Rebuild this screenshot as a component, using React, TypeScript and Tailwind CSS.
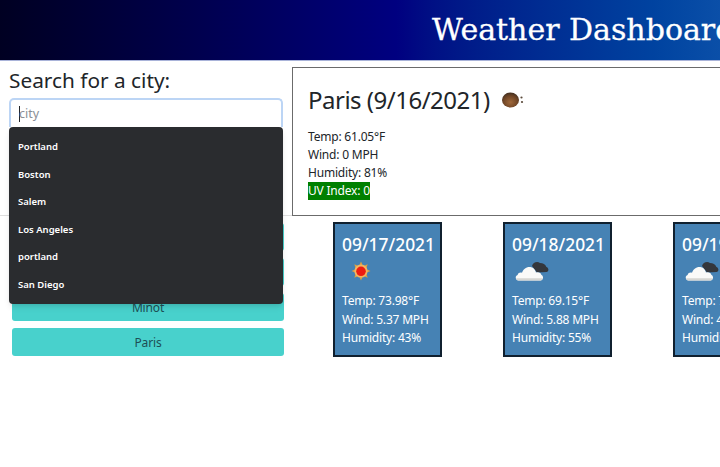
import React from "react";

const suggestions = ["Portland", "Boston", "Salem", "Los Angeles", "portland", "San Diego"];
const history = ["Portland", "Boston", "Minot", "Paris"];

const forecast = [
  { date: "09/17/2021", icon: "sun", temp: "73.98", wind: "5.37", humidity: "43" },
  { date: "09/18/2021", icon: "cloud", temp: "69.15", wind: "5.88", humidity: "55" },
  { date: "09/19/2021", icon: "cloud", temp: "72.41", wind: "4.12", humidity: "52" },
];

function BallIcon() {
  return (
    <svg width="24" height="20" viewBox="0 0 24 20" className="ml-[11px]">
      <defs>
        <radialGradient id="ball" cx="50%" cy="65%" r="60%">
          <stop offset="0%" stopColor="#a0683a" />
          <stop offset="70%" stopColor="#6f4526" />
          <stop offset="100%" stopColor="#4a3322" />
        </radialGradient>
      </defs>
      <ellipse cx="9.5" cy="10" rx="8.5" ry="7.5" fill="url(#ball)" />
      <circle cx="20.5" cy="7.5" r="1.1" fill="#5b4a3a" />
      <circle cx="21" cy="12" r="1.1" fill="#5b4a3a" />
    </svg>
  );
}

function SunIcon() {
  const rays = [0, 45, 90, 135, 180, 225, 270, 315];
  return (
    <svg width="20" height="20" viewBox="0 0 20 20" className="ml-[9px]">
      {rays.map((r) => (
        <path key={r} d="M10 0.5 L11.6 4 L8.4 4 Z" fill="#e0a040" transform={`rotate(${r} 10 10)`} />
      ))}
      <circle cx="10" cy="10" r="6.6" fill="#f3b562" />
      <circle cx="10" cy="10.3" r="4.8" fill="#ee1c10" />
    </svg>
  );
}

function CloudIcon() {
  return (
    <svg width="36" height="20" viewBox="0 0 36 20" className="ml-[3px]">
      <path
        d="M17 5 C18 1.5 22 0 25 2 C28 2 30.5 3.6 31.4 6 C33.6 6.6 34.6 10.4 31.4 11 L22 11.4 Z"
        fill="#34373c"
      />
      <path
        d="M3.5 19.5 C0.4 19.5 -0.4 15 2.6 14 C3 11.6 5.6 11 7 11.8 C8.2 8 12 5 16.4 6.2 C19 7 20.6 9.4 21 11.6 C23 10.6 26 11.4 26.4 14 C28.8 14.6 28.6 19.5 25.4 19.5 Z"
        fill="#fafaf8"
      />
      <path d="M3.5 19.5 C2 19.5 1.2 18.4 1.1 17.2 L27.8 17.2 C27.6 18.4 26.6 19.5 25.4 19.5 Z" fill="#d6d6d2" />
    </svg>
  );
}

export default function App() {
  return (
    <div className="h-screen w-full overflow-hidden bg-white font-['Noto_Sans',sans-serif] text-[#212529]">
      <header className="h-[61px] bg-gradient-to-r from-[#000022] via-[#000080] via-55% to-[#0b4fa8] pl-[432px] pt-[1px] whitespace-nowrap border-b border-b-[#a9b3d9]">
        <h1 className="font-['DejaVu_Serif',serif] text-[30px] leading-[58px] text-white [-webkit-text-stroke:0.3px_white]">
          Weather Dashboard
        </h1>
      </header>

      <main className="flex">
        <section className="w-[292px] shrink-0">
          <h2 className="ml-[9px] mt-[6px] h-[31px] text-[20.8px] leading-[27px]">Search for a city:</h2>
          <div className="relative ml-[9px] w-[274px]">
            <div className="flex h-[29px] items-center rounded-t-[5px] border-2 border-b-0 border-[#bcd5f5] pl-[8px] pt-[1px] text-[12.5px] text-[#8a8f96]">
              <span className="mr-[-1px] h-[16px] w-px bg-[#212529]" />
              city
            </div>
            <ul className="absolute left-0 top-[29px] z-10 h-[177px] w-full rounded-[4px] bg-[#2a2c2f] pt-[6px] shadow-md">
              {suggestions.map((s) => (
                <li key={s} className="h-[27.5px] pl-[9px] text-[9.5px] font-semibold leading-[27.5px] text-white">
                  {s}
                </li>
              ))}
            </ul>
          </div>
          <hr className="mt-[88px] border-[#dedede]" />
          <div className="ml-[12px] mt-[7px] flex w-[272px] flex-col gap-[7px]">
            {history.map((c) => (
              <button key={c} className="h-[28px] rounded-[3px] bg-[#48d1cc] pt-[1px] text-[12px] tracking-[-0.15px] text-[#1d4f55]">
                {c}
              </button>
            ))}
          </div>
        </section>

        <section className="min-w-0 flex-1">
          <div className="mt-[6px] h-[149px] w-[600px] border border-[#6b6b6b] pl-[15px] pt-[17px]">
            <div className="flex items-center">
              <h2 className="text-[24px] leading-[30px] tracking-[-0.5px]">Paris (9/16/2021)</h2>
              <BallIcon />
            </div>
            <div className="mt-[13px] text-[12px] leading-[18px] tracking-[-0.2px]">
              <p>Temp: 61.05°F</p>
              <p>Wind: 0 MPH</p>
              <p>Humidity: 81%</p>
              <p className="w-fit bg-[#008000] text-white">UV Index: 0</p>
            </div>
          </div>

          <div className="ml-[41px] mt-[6px] flex gap-[61px]">
            {forecast.map((f) => (
              <article
                key={f.date}
                className="h-[135px] w-[109px] shrink-0 border-2 border-[#10202f] bg-[#4682b4] pl-[7px] pt-[8px] text-white"
              >
                <h3 className="whitespace-nowrap text-[17.4px] font-medium leading-[24px]">{f.date}</h3>
                <div className="mt-[5px] h-[20px]">{f.icon === "sun" ? <SunIcon /> : <CloudIcon />}</div>
                <div className="mt-[11px] whitespace-nowrap text-[12px] leading-[18.5px] tracking-[-0.2px]">
                  <p>Temp: {f.temp}°F</p>
                  <p>Wind: {f.wind} MPH</p>
                  <p>Humidity: {f.humidity}%</p>
                </div>
              </article>
            ))}
          </div>
        </section>
      </main>
    </div>
  );
}
